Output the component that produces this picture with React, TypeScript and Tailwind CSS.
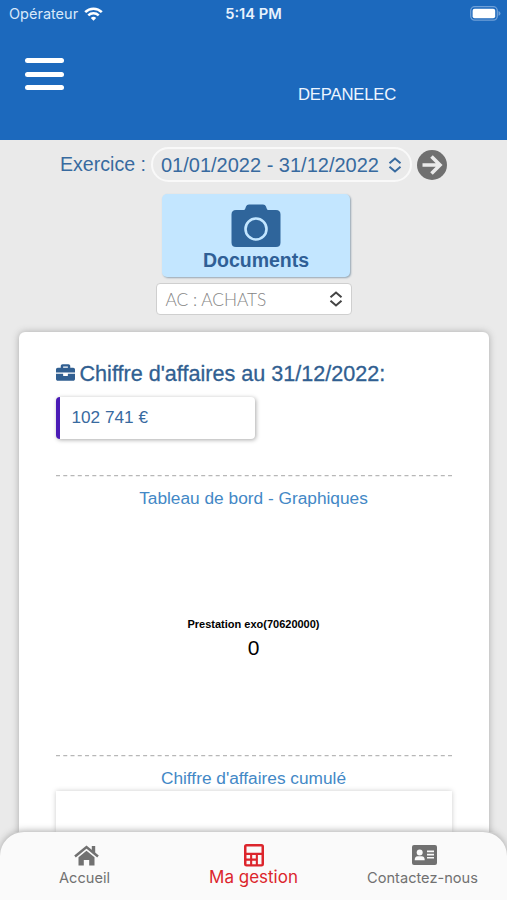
import { FaBriefcase } from "react-icons/fa";

const navigationItems = [
  { id: "home", label: "Accueil" },
  { id: "management", label: "Ma gestion" },
  { id: "contact", label: "Contactez-nous" },
];

function WifiIcon() {
  return (
    <svg viewBox="0 0 19 14" className="w-[19px] h-[14px]" fill="none">
      <path d="M1.2 5.2a11.8 11.8 0 0 1 16.6 0" stroke="white" strokeWidth="2.6" />
      <path d="M4.3 8.4a7.4 7.4 0 0 1 10.4 0" stroke="white" strokeWidth="2.5" />
      <path d="M9.5 13.8 6.8 11a3.8 3.8 0 0 1 5.4 0Z" fill="white" />
    </svg>
  );
}

function BatteryIcon() {
  return (
    <svg viewBox="0 0 31 15" className="w-[31px] h-[15px]">
      <rect x="0.7" y="0.7" width="26.6" height="13.4" rx="4" fill="none" stroke="#6fa0d8" strokeWidth="1.3" />
      <rect x="2.6" y="2.8" width="22.6" height="9.4" rx="2" fill="white" />
      <path d="M28.5 5v4.8q2-.7 2-2.4t-2-2.4" fill="#6fa0d8" />
    </svg>
  );
}

function Chevrons() {
  return (
    <svg viewBox="0 0 14 16" className="w-[14px] h-4" fill="none" stroke="currentColor" strokeWidth="2">
      <path d="m1.500 6.300 5.500-4.800 5.500 4.800M1.500 9.700 7 14.500l5.500-4.800" />
    </svg>
  );
}

function ArrowIcon() {
  return (
    <svg viewBox="0 0 30 30" className="w-[30px] h-[30px]" fill="none" stroke="currentColor" strokeWidth="3.600">
      <path d="M5.500 15h17M14.500 6.500 23 15l-8.500 8.500" />
    </svg>
  );
}

function CameraIcon() {
  return (
    <svg viewBox="0 0 50 44" className="w-[50px] h-[44px]">
      <path d="M5 6h8q1 0 1.500-2l.5-1.500Q15.700.5 18 .5h14q2.300 0 3 2l.5 1.500q.5 2 1.500 2h8q4.500 0 4.500 4.500v28Q49.500 43 45 43H5Q.5 43 .5 38.500v-28Q.5 6 5 6Z" fill="#2f659b" />
      <circle cx="25" cy="25" r="10.500" fill="none" stroke="#c3e6ff" strokeWidth="2.600" />
    </svg>
  );
}

function NavIcon({ id }: { id: string }) {
  if (id === "home") {
    return (
      <svg viewBox="0 0 25 21" className="w-[25px] h-[21px]">
        <path d="M1 11.500 12.500 2 24 11.500" fill="none" stroke="currentColor" strokeWidth="2.500" />
        <path d="M17.800 1h3.400v8l-3.400-3Z" fill="currentColor" />
        <path d="m4.500 12.300 8-6.600 8 6.600v8.200h-5.300V15H9.800v5.500H4.500Z" fill="currentColor" />
      </svg>
    );
  }
  if (id === "management") {
    return (
      <svg viewBox="0 0 20 23" className="w-5 h-[23px]">
        <path fillRule="evenodd" fill="currentColor" d="M2.500 0h15Q20 0 20 2.500v17.800q0 2.200-2.500 2.200h-15Q0 22.500 0 20.300V2.500Q0 0 2.500 0ZM2.500 2.500v6.200h15v-6.200Zm0 8.500v3.500h3.600v-3.500Zm5.700 0v3.500h3.600v-3.500Zm5.700 0v9.200h3.600v-9.200ZM2.500 16.700v3.500h3.600v-3.500Zm5.700 0v3.500h3.600v-3.500Z" />
      </svg>
    );
  }
  return (
    <svg viewBox="0 0 25 20" className="w-[25px] h-5">
      <rect width="25" height="20" rx="2" fill="currentColor" />
      <g fill="#fafafa">
        <circle cx="7.700" cy="7.500" r="3" />
        <path d="M2.700 15.300q0-4 3-4h4q3 0 3 4Z" />
        <path d="M15 5.500h7v1.700h-7zM15 8.700h7v1.700h-7zM15 11.900h7v1.700h-7z" />
      </g>
    </svg>
  );
}

function Divider() {
  return (
    <svg viewBox="0 0 396 2" className="block w-[396px] h-[2px]">
      <path d="M0 .7h396" stroke="#b7b7b7" strokeWidth="1.300" strokeDasharray="4 3.260" />
    </svg>
  );
}

export default function App() {
  return (
    <div className="w-[507px] h-[900px] overflow-hidden bg-[#eaeaea] font-['Liberation_Sans',sans-serif] text-[#386a9f] flex flex-col whitespace-nowrap">
      <header className="h-[140px] shrink-0 bg-[#1c69bd] text-white">
        <div className="h-[27px] grid grid-cols-3 items-center pl-[9px] pr-[6px] font-['Inter',sans-serif]">
          <div className="flex items-center gap-1.5 text-[14.5px] text-[#d8e8fa]">
            Opérateur
            <WifiIcon />
          </div>
          <span className="text-center text-[14.7px] font-semibold text-[#e8f2fd] pt-px pr-[3px]">5:14 PM</span>
          <div className="flex justify-end"><BatteryIcon /></div>
        </div>
        <div className="flex pt-[31px] pl-[25px]">
          <button aria-label="Menu" className="flex flex-col gap-[8.5px] w-10">
            <span className="block w-[39px] h-[5px] rounded-full bg-white" />
            <span className="block w-[39px] h-[5px] rounded-full bg-white" />
            <span className="block w-[39px] h-[5px] rounded-full bg-white" />
          </button>
          <span className="ml-[233px] mt-[26px] text-[16.7px] leading-[22px] tracking-[-0.2px] text-[#edf5ff]">DEPANELEC</span>
        </div>
      </header>

      <main className="flex flex-col items-center h-[692px] shrink-0 overflow-hidden">
        <div className="w-full shrink-0 flex items-center h-[49px] pl-[60px] text-[20px]">
          <span className="w-[91px] text-[19.6px]">Exercice :</span>
          <div className="w-[261px] h-[35px] border-2 border-[#f9f9f9] rounded-full flex items-center justify-between pl-[8px] pr-[8px]">
            <span>01/01/2022 - 31/12/2022</span>
            <Chevrons />
          </div>
          <button aria-label="Suivant" className="ml-[5px] mt-px w-[30px] h-[30px] rounded-full bg-[#707070] text-[#eaeaea]">
            <ArrowIcon />
          </button>
        </div>

        <button className="shrink-0 mt-[5px] ml-[5px] w-[188px] h-[83px] rounded-[5px] bg-[#c3e6ff] shadow-[1px_1px_2px_#94a5b2] flex flex-col items-center pt-[10px] text-[#2f5f96]">
          <CameraIcon />
          <span className="text-[19.5px] leading-[24px] font-bold">Documents</span>
        </button>
        <div className="shrink-0 mt-[6px] w-[196px] h-[32px] rounded bg-white border border-[#cfcfcf] flex items-center justify-between pl-[9px] pr-[8px] font-['Lato',sans-serif] font-light text-[#858585] text-[17.3px]">
          <span className="pt-px">AC : ACHATS</span>
          <span className="text-[#444]"><Chevrons /></span>
        </div>

        <section className="shrink-0 mt-[17px] w-[470px] h-[550px] rounded-md bg-white shadow-[0_0_7px_#aaa] px-[37px] pt-[29px]">
          <h1 className="flex items-center gap-[5px] h-[26px] text-[21.6px] text-[#315f91] [-webkit-text-stroke:0.3px_currentColor]">
            <FaBriefcase size={19} className="mb-1" />
            Chiffre d'affaires au 31/12/2022:
          </h1>
          <div className="mt-[10px] w-[199px] h-[42px] rounded-[4px] bg-white border-l-4 border-[#4a1bb5] shadow-[1px_1px_4px_#aaa] flex items-center pl-[12px] text-[17.2px]">102 741 €</div>
          <div className="mt-[36px] h-[280px]">
            <Divider />
            <h2 className="h-[43px] flex items-center justify-center text-[17.3px] text-[#4388c6]">Tableau de bord - Graphiques</h2>
            <div className="mt-[94px] flex flex-col items-center text-black">
              <span className="text-[11px] leading-5 font-bold">Prestation exo(70620000)</span>
              <span className="text-[21px] leading-6 mt-[2px]">0</span>
            </div>
          </div>
          <Divider />
          <h2 className="h-[34px] pt-[9px] text-center text-[17.3px] leading-[24px] text-[#4388c6]">Chiffre d'affaires cumulé</h2>
          <div className="h-12 bg-white shadow-[0_0_5px_#ccc]" />
        </section>
      </main>

      <nav className="relative z-10 h-[68px] shrink-0 rounded-t-[24px] bg-[#fafafa] shadow-[0_-1px_7px_#aaa] grid grid-cols-3 text-[#717171] font-['Inter',sans-serif]">
        {navigationItems.map((item) => (
          <button
            key={item.id}
            className={
              item.id === "management"
                ? "flex flex-col items-center pt-[12px] text-[17px] text-[#dc252c]"
                : "flex flex-col items-center justify-start pt-[13px] text-[14.6px]"
            }
          >
            <span className={item.id === "management" ? "h-[23px]" : "h-[23px] pl-[3px]"}>
              <NavIcon id={item.id} />
            </span>
            <span className="leading-[20px]">{item.label}</span>
          </button>
        ))}
      </nav>
    </div>
  );
}
